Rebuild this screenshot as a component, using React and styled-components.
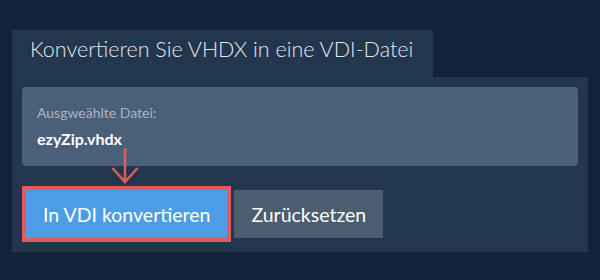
import React from 'react';
import styled, { createGlobalStyle } from 'styled-components';

const GlobalStyle = createGlobalStyle`
  body {
    margin: 0;
    background: #11233a;
    font-family: Lato, "Open Sans", sans-serif;
  }
`;

const Page = styled.div`
  width: 600px;
  height: 280px;
  padding: 30px 12px 0;
  box-sizing: border-box;
`;

const Tab = styled.div`
  width: 421px;
  height: 47px;
  box-sizing: border-box;
  padding: 4px 0 0 18px;
  background: #22364d;
  color: #e4e9ee;
  font-size: 21.5px;
  font-weight: 300;
  line-height: 30px;
  white-space: nowrap;
`;

const Panel = styled.div`
  position: relative;
  background: #22364d;
  padding: 10px;
`;

const FileBox = styled.div`
  background: #4a6079;
  border-radius: 4px;
  padding: 16px 15px 16px;
`;

const Label = styled.div`
  color: #a9b5c3;
  font-size: 14px;
  line-height: 20px;
`;

const FileName = styled.div`
  margin-top: 5px;
  color: #ffffff;
  font-size: 16px;
  font-weight: 700;
  line-height: 22px;
`;

const Arrow = styled.svg`
  position: absolute;
  left: 99px;
  top: 70px;
`;

const Actions = styled.div`
  display: flex;
  align-items: center;
  gap: 3px;
  margin-top: 20px;
`;

const Button = styled.button`
  height: ${(p) => (p.$primary ? '56px' : '48px')};
  padding: 0 17px;
  border: ${(p) => (p.$primary ? '4px solid #e05c5c' : 'none')};
  border-radius: 0;
  background: ${(p) => (p.$primary ? '#4d9de6' : '#4b5d6f')};
  color: #ffffff;
  font-family: Lato, "Open Sans", sans-serif;
  font-size: 19.5px;
  font-weight: 400;
  cursor: pointer;
`;

const App = () => {
  return (
    <>
      <GlobalStyle />
      <Page>
        <Tab>Konvertieren Sie VHDX in eine VDI-Datei</Tab>
        <Panel>
          <FileBox>
            <Label>Ausgweählte Datei:</Label>
            <FileName>ezyZip.vhdx</FileName>
          </FileBox>
          <Arrow width="30" height="40" viewBox="0 0 30 40">
            <path
              d="M14 1 V35 M1.5 21 L14 35 L26.5 21"
              fill="none"
              stroke="#e05c5c"
              strokeWidth="2.5"
            />
          </Arrow>
          <Actions>
            <Button $primary>In VDI konvertieren</Button>
            <Button>Zurücksetzen</Button>
          </Actions>
        </Panel>
      </Page>
    </>
  );
};

export default App;
